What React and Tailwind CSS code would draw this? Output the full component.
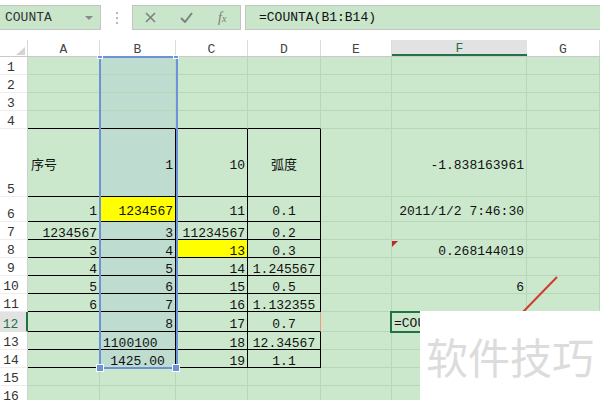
import React from "react";

const MONO = "font-['Liberation_Mono','Noto_Sans_CJK_SC',monospace]";

const cols = [
  { k: "A", w: "w-[72px]" },
  { k: "B", w: "w-[76px]" },
  { k: "C", w: "w-[72px]" },
  { k: "D", w: "w-[73px]" },
  { k: "E", w: "w-[71px]" },
  { k: "F", w: "w-[135px]" },
  { k: "G", w: "w-[73px]" },
];

// cell: [text, align, fill]
const rows = [
  { n: 1, h: "h-[18px]" },
  { n: 2, h: "h-[18px]" },
  { n: 3, h: "h-[18px]" },
  { n: 4, h: "h-[18px]" },
  {
    n: 5,
    h: "h-[68px]",
    c: { A: ["序号", "l"], B: ["1"], C: ["10"], D: ["弧度", "c"], F: ["-1.838163961"] },
  },
  {
    n: 6,
    h: "h-[25px]",
    c: { A: ["1"], B: ["1234567", "r", "y"], C: ["11"], D: ["0.1", "c"], F: ["2011/1/2 7:46:30"] },
  },
  { n: 7, h: "h-[18px]", c: { A: ["1234567"], B: ["3"], C: ["11234567"], D: ["0.2", "c"] } },
  {
    n: 8,
    h: "h-[18px]",
    c: { A: ["3"], B: ["4"], C: ["13", "r", "y"], D: ["0.3", "c"], F: ["0.268144019"] },
  },
  { n: 9, h: "h-[18px]", c: { A: ["4"], B: ["5"], C: ["14"], D: ["1.245567", "c"] } },
  { n: 10, h: "h-[18px]", c: { A: ["5"], B: ["6"], C: ["15"], D: ["0.5", "c"], F: ["6"] } },
  { n: 11, h: "h-[18px]", c: { A: ["6"], B: ["7"], C: ["16"], D: ["1.132355", "c"] } },
  { n: 12, h: "h-[20px]", c: { B: ["8"], C: ["17"], D: ["0.7", "c"] } },
  { n: 13, h: "h-[18px]", c: { B: ["1100100", "l"], C: ["18"], D: ["12.34567", "c"] } },
  { n: 14, h: "h-[18px]", c: { B: ["1425.00", "c"], C: ["19"], D: ["1.1", "c"] } },
  { n: 15, h: "h-[18px]" },
  { n: 16, h: "h-[18px]" },
];

const inTable = (k) => k === "A" || k === "B" || k === "C" || k === "D";

function Cell({ col, row }) {
  const data = row.c && row.c[col.k];
  const align = data ? data[1] || "r" : "r";
  let bg = "bg-[#cbe8cd]";
  if (col.k === "B" && row.n <= 14) bg = "bg-[#bedcd0]";
  if (data && data[2] === "y") bg = "bg-[#ffff00]";

  let bb = "border-b-[#b7d6ba]";
  if (inTable(col.k) && row.n >= 4 && row.n <= 14) bb = "border-b-black";
  let br = "border-r-[#b7d6ba]";
  if (inTable(col.k) && row.n >= 5 && row.n <= 14) br = "border-r-black";
  if (col.k === "D" && row.n === 12) br = "border-r-[#f09a86]";

  const just =
    align === "l" ? "justify-start pl-[3px]" : align === "c" ? "justify-center" : "justify-end pr-[2px]";

  return (
    <div className={`${col.w} shrink-0 flex items-center pt-[5px] border-r border-b ${bg} ${bb} ${br} ${just}`}>
      {data && <span className="whitespace-nowrap leading-none">{data[0]}</span>}
    </div>
  );
}

export default function App() {
  return (
    <div className={`relative w-[600px] h-[400px] overflow-hidden bg-white text-[13px] text-[#111] ${MONO}`}>
      {/* toolbar */}
      <div className="h-[40px] flex items-start pt-[5px]">
        <div className="w-[101px] h-[25px] bg-[#c9e6cb] border border-[#c4c4c4] border-l-0 flex items-center pl-[5px] text-[#333]">
          <span className="flex-1">COUNTA</span>
          <span className="w-0 h-0 border-l-[4px] border-r-[4px] border-t-[4px] border-l-transparent border-r-transparent border-t-[#8a8a8a] mr-[7px]" />
        </div>
        <div className="w-[31px] h-[25px] flex flex-col items-center justify-center gap-[3px]">
          <span className="w-[2px] h-[2px] bg-[#b8b8b8]" />
          <span className="w-[2px] h-[2px] bg-[#b8b8b8]" />
          <span className="w-[2px] h-[2px] bg-[#b8b8b8]" />
        </div>
        <div className="w-[109px] h-[25px] bg-[#c9e6cb] border border-[#c4c4c4] flex items-center">
          <div className="w-[36px] flex justify-center">
            <svg width="11" height="11" viewBox="0 0 11 11">
              <path d="M1 1 L10 10 M10 1 L1 10" stroke="#808080" strokeWidth="1.6" />
            </svg>
          </div>
          <div className="w-[36px] flex justify-center">
            <svg width="13" height="11" viewBox="0 0 13 11">
              <path d="M1 6 L5 10 L12 1" stroke="#808080" strokeWidth="2" fill="none" />
            </svg>
          </div>
          <div className="w-[36px] flex justify-center font-['Liberation_Serif',serif] italic text-[#7a7a7a]">
            <span className="text-[14px]">f</span>
            <span className="text-[10px] mt-[4px]">x</span>
          </div>
        </div>
        <div className="flex-1 ml-[4px] h-[25px] bg-[#c9e6cb] border border-[#c4c4c4] border-r-0 flex items-center pl-[13px] text-[#111]">
          =COUNTA(B1:B14)
        </div>
      </div>

      {/* column headers */}
      <div className="flex h-[17px] bg-white border-b border-[#c9c9c9] text-[#444]">
        <div className="w-[28px] shrink-0 relative border-r border-[#d8d8d8]">
          <svg className="absolute left-[16px] top-[7px]" width="9" height="8" viewBox="0 0 9 8">
            <path d="M9 0 L9 8 L0 8 Z" fill="#d4d4d4" />
          </svg>
        </div>
        {cols.map((c) =>
          c.k === "F" ? (
            <div
              key={c.k}
              className={`${c.w} shrink-0 flex items-center justify-center pt-[3px] leading-none bg-[#e2e2e2] border-b-2 border-[#217346] text-[#217346]`}
            >
              {c.k}
            </div>
          ) : (
            <div
              key={c.k}
              className={`${c.w} shrink-0 flex items-center justify-center pt-[3px] leading-none border-r border-[#dcdcdc]`}
            >
              {c.k}
            </div>
          )
        )}
      </div>

      {/* rows */}
      {rows.map((r) => (
        <div key={r.n} className={`flex ${r.h}`}>
          <div
            className={`w-[28px] shrink-0 flex items-end justify-center pr-[5px] border-b ${
              r.n === 12
                ? "bg-[#e2e2e2] text-[#217346] border-r-2 border-r-[#217346] border-b-[#e2e2e2]"
                : "bg-white text-[#333] border-r border-r-[#d0d0d0] border-b-[#ededed]"
            }`}
          >
            <span className="h-[17px] flex items-center pt-[4px] leading-none">{r.n}</span>
          </div>
          {cols.map((c) => (
            <Cell key={c.k} col={c} row={r} />
          ))}
        </div>
      ))}

      {/* selection B1:B14 */}
      <div className="absolute left-[99px] top-[56px] w-[79px] h-[313px] border-2 border-[#6d92d8] pointer-events-none" />
      <div className="absolute left-[97px] top-[55px] w-[6px] h-[4px] bg-[#6d92d8] border border-white" />
      <div className="absolute left-[173px] top-[55px] w-[6px] h-[4px] bg-[#6d92d8] border border-white" />
      <div className="absolute left-[96px] top-[364px] w-[8px] h-[8px] bg-[#6d92d8] border border-white" />
      <div className="absolute left-[172px] top-[364px] w-[8px] h-[8px] bg-[#6d92d8] border border-white" />

      {/* red comment mark on F8 */}
      <svg className="absolute left-[392px] top-[241px]" width="6" height="6" viewBox="0 0 6 6">
        <path d="M0 0 L6 0 L0 6 Z" fill="#c0282a" />
      </svg>

      {/* active cell F12, editing */}
      <div className="absolute left-[390px] top-[311px] w-[138px] h-[22px] border-2 border-[#217346] bg-[#cbe8cd] flex items-center pl-[2px] pt-[3px] leading-none">
        <span className="w-[28px] overflow-hidden whitespace-nowrap">=COU</span>
      </div>

      {/* red arrow */}
      <svg className="absolute left-0 top-0" width="600" height="400">
        <line x1="557" y1="277" x2="521" y2="314" stroke="#d23a2e" strokeWidth="2" />
      </svg>

      {/* watermark */}
      <div className="absolute left-[420px] top-[311px] w-[180px] h-[89px] bg-white flex items-center pl-[6px] font-['Noto_Sans_CJK_SC',sans-serif] text-[42px] text-[#dcdcdc] leading-none">
        软件技巧
      </div>
    </div>
  );
}
